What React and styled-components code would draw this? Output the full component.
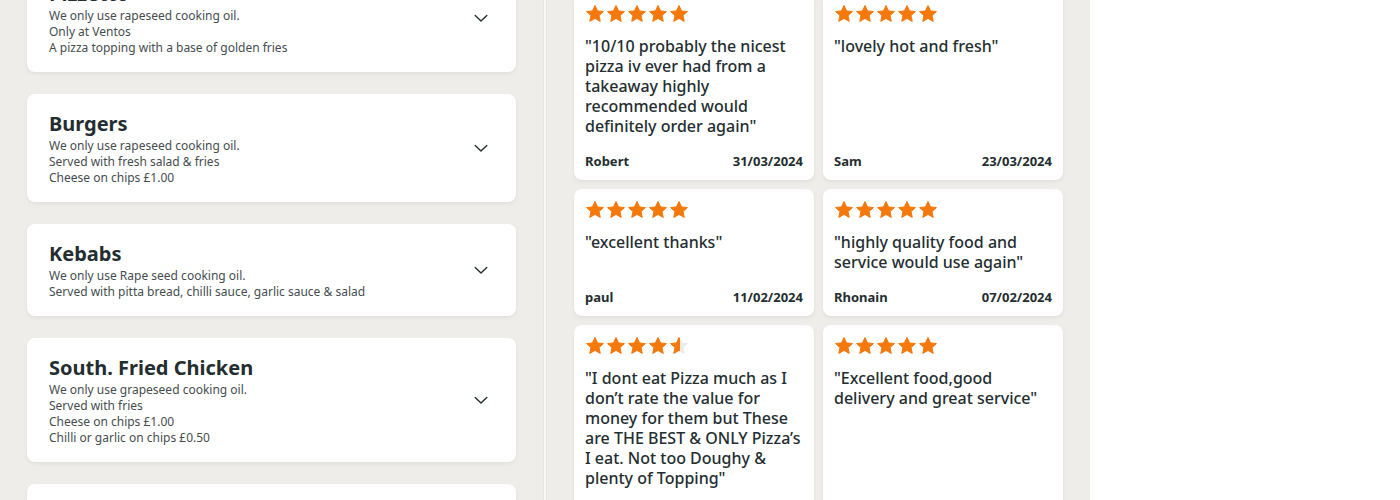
import styled, { createGlobalStyle } from "styled-components";

const GlobalStyle = createGlobalStyle`
  html, body {
    margin: 0;
    padding: 0;
    height: 500px;
    overflow: hidden;
    background: #ffffff;
    font-family: "Noto Sans", "Open Sans", sans-serif;
  }
`;

const categories = [
  {
    title: "Pizzetto",
    lines: [
      "We only use rapeseed cooking oil.",
      "Only at Ventos",
      "A pizza topping with a base of golden fries",
    ],
  },
  {
    title: "Burgers",
    lines: [
      "We only use rapeseed cooking oil.",
      "Served with fresh salad & fries",
      "Cheese on chips £1.00",
    ],
  },
  {
    title: "Kebabs",
    lines: [
      "We only use Rape seed cooking oil.",
      "Served with pitta bread, chilli sauce, garlic sauce & salad",
    ],
  },
  {
    title: "South. Fried Chicken",
    lines: [
      "We only use grapeseed cooking oil.",
      "Served with fries",
      "Cheese on chips £1.00",
      "Chilli or garlic on chips £0.50",
    ],
  },
  {
    title: "Wraps",
    lines: ["We only use rapeseed cooking oil.", "Served with fries"],
  },
];

const reviews = [
  {
    rating: 5,
    text: "10/10 probably the nicest pizza iv ever had from a takeaway highly recommended would definitely order again",
    name: "Robert",
    date: "31/03/2024",
  },
  { rating: 5, text: "lovely hot and fresh", name: "Sam", date: "23/03/2024" },
  { rating: 5, text: "excellent thanks", name: "paul", date: "11/02/2024" },
  {
    rating: 5,
    text: "highly quality food and service would use again",
    name: "Rhonain",
    date: "07/02/2024",
  },
  {
    rating: 4.5,
    text: "I dont eat Pizza much as I don’t rate the value for money for them but These are THE BEST & ONLY Pizza’s I eat. Not too Doughy & plenty of Topping",
    name: "Dean",
    date: "02/02/2024",
  },
  {
    rating: 5,
    text: "Excellent food,good delivery and great service",
    name: "Kerry",
    date: "28/01/2024",
  },
];

const STAR =
  "M12 1.8l3.05 6.5 7.05.8-5.25 4.8 1.45 6.95L12 17.3l-6.3 3.55 1.45-6.95L1.9 9.1l7.05-.8z";

function Star({ fill, id }) {
  // fill: 1 = full, 0.5 = half
  const half = fill < 1;
  return (
    <svg width="20" height="20" viewBox="0 0 24 24">
      {half && (
        <defs>
          <linearGradient id={id} x1="0" x2="1" y1="0" y2="0">
            <stop offset="55%" stopColor="#f5780a" />
            <stop offset="55%" stopColor="#ebebea" />
          </linearGradient>
        </defs>
      )}
      <path
        d={STAR}
        fill={half ? `url(#${id})` : "#f5780a"}
        stroke={half ? `url(#${id})` : "#f5780a"}
        strokeWidth="1.2"
        strokeLinejoin="round"
      />
    </svg>
  );
}

function Chevron() {
  return (
    <svg width="16" height="16" viewBox="0 0 16 16" fill="none">
      <path
        d="M2.2 5.6L8 11l5.8-5.4"
        stroke="#242e30"
        strokeWidth="1.4"
        strokeLinecap="round"
        strokeLinejoin="round"
      />
    </svg>
  );
}

export default function App() {
  return (
    <>
      <GlobalStyle />
      <Page>
        <MenuPane>
          <CategoryList>
            {categories.map((c) => (
              <CategoryCard key={c.title}>
                <CategoryInfo>
                  <CategoryTitle>{c.title}</CategoryTitle>
                  {c.lines.map((l) => (
                    <CategoryLine key={l}>{l}</CategoryLine>
                  ))}
                </CategoryInfo>
                <ChevronBox>
                  <Chevron />
                </ChevronBox>
              </CategoryCard>
            ))}
          </CategoryList>
        </MenuPane>
        <Divider />
        <ReviewPane>
          <ReviewGrid>
            {reviews.map((r, idx) => (
              <ReviewCard key={r.name + idx}>
                <Stars>
                  {[0, 1, 2, 3, 4].map((i) => (
                    <Star
                      key={i}
                      id={`half-${idx}-${i}`}
                      fill={Math.min(1, Math.max(0, r.rating - i))}
                    />
                  ))}
                </Stars>
                <Quote>{`"${r.text}"`}</Quote>
                <ReviewFooter>
                  <span>{r.name}</span>
                  <span>{r.date}</span>
                </ReviewFooter>
              </ReviewCard>
            ))}
          </ReviewGrid>
        </ReviewPane>
        <Blank />
      </Page>
    </>
  );
}

const Page = styled.div`
  display: flex;
  height: 500px;
  overflow: hidden;
`;

const MenuPane = styled.div`
  width: 543px;
  flex-shrink: 0;
  background: #eeedea;
  padding: 0 27px;
  box-sizing: border-box;
  overflow: hidden;
`;

const CategoryList = styled.div`
  display: flex;
  flex-direction: column;
  gap: 22px;
  margin-top: -36px;
`;

const CategoryCard = styled.div`
  display: flex;
  align-items: center;
  background: #ffffff;
  border-radius: 8px;
  box-shadow: 0 2px 4px rgba(0, 0, 0, 0.06);
  padding: 16px 27px 16px 22px;
`;

const CategoryInfo = styled.div`
  flex: 1;
  display: flex;
  flex-direction: column;
`;

const CategoryTitle = styled.h3`
  margin: 0;
  font-size: 20px;
  line-height: 28px;
  font-weight: 700;
  color: #242e30;
`;

const CategoryLine = styled.p`
  margin: 0;
  font-size: 12px;
  line-height: 16px;
  color: #454d4f;
`;

const ChevronBox = styled.div`
  width: 16px;
  height: 16px;
  display: flex;
`;

const Divider = styled.div`
  width: 4px;
  flex-shrink: 0;
  background: #f8f8f7;
  box-shadow: inset 1px 0 0 #e6e5e2, inset -1px 0 0 #e6e5e2;
`;

const ReviewPane = styled.div`
  width: 543px;
  flex-shrink: 0;
  background: #eeedea;
  padding: 0 27px;
  box-sizing: border-box;
  overflow: hidden;
`;

const ReviewGrid = styled.div`
  display: grid;
  grid-template-columns: 240px 240px;
  gap: 9px;
  margin-top: -7px;
`;

const ReviewCard = styled.div`
  display: flex;
  flex-direction: column;
  background: #ffffff;
  border-radius: 8px;
  box-shadow: 0 2px 4px rgba(0, 0, 0, 0.06);
  padding: 11px;
`;

const Stars = styled.div`
  display: flex;
  gap: 1px;
  height: 20px;
`;

const Quote = styled.p`
  margin: 12px 0 17px;
  font-size: 16px;
  line-height: 20px;
  font-weight: 500;
  color: #242e30;
`;

const ReviewFooter = styled.div`
  margin-top: auto;
  display: flex;
  justify-content: space-between;
  font-size: 13px;
  line-height: 16px;
  font-weight: 700;
  color: #242e30;
`;

const Blank = styled.div`
  flex: 1;
  background: #ffffff;
`;
